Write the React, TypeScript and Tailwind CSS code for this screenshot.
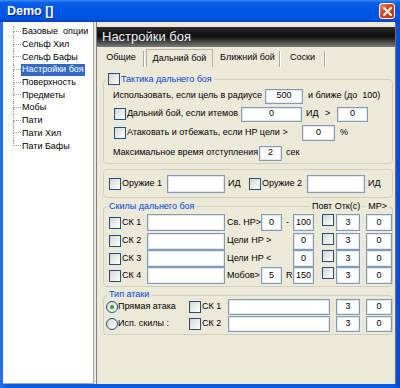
import React from 'react';

// tree on the left
const treeItems = [
  'Базовые  опции',
  'Сельф Хил',
  'Сельф Бафы',
  'Настройки боя',
  'Поверхность',
  'Предметы',
  'Мобы',
  'Пати',
  'Пати Хил',
  'Пати Бафы',
];

const Check = () => (
  <span className="inline-block w-[12px] h-[12px] shrink-0 border border-[#1C5180] bg-[linear-gradient(135deg,#D6D6CE,#FFFFFF)]" />
);

const Radio = ({ on = false }: { on?: boolean }) => (
  <span className="flex items-center justify-center w-[12px] h-[12px] shrink-0 rounded-full border border-[#1C5180] bg-[linear-gradient(135deg,#D6D6CE,#FFFFFF)]">
    {on && <span className="w-[4px] h-[4px] rounded-full bg-[#21A121]" />}
  </span>
);

const Field = ({ className, value = '' }: { className: string; value?: string }) => (
  <div
    className={`flex items-center justify-center shrink-0 bg-white border border-[#7F9DB9] shadow-[inset_0_0_0_1px_#E4E8EE] ${className}`}
  >
    {value}
  </div>
);

const TitleBar = () => (
  <div className="h-[22px] flex items-center pl-[7px] pr-[5px] bg-[linear-gradient(to_bottom,#3D8DF5_0%,#0A60E8_12%,#0056E6_50%,#0052DF_85%,#0042C4_100%)]">
    <span className="font-bold text-[12.5px] text-white [text-shadow:1px_1px_0_#0A2A8C]">Demo []</span>
    <div className="ml-auto w-[16px] h-[16px] rounded-[3px] border border-white bg-[linear-gradient(135deg,#EA8A6C,#D9461F_45%,#C2320F)] flex items-center justify-center">
      <svg width="9" height="9" viewBox="0 0 9 9">
        <path d="M1 1 L8 8 M8 1 L1 8" stroke="white" strokeWidth="2" strokeLinecap="round" />
      </svg>
    </div>
  </div>
);

const Tree = () => (
  <div className="w-[90px] bg-white border-b border-[#ACA899] pt-[3.5px] pl-[10px]">
    {treeItems.map((t, i) => (
      <div key={t} className="flex h-[12.7px]">
        <div className="w-[8px] flex flex-col">
          <div className="h-1/2 border-l border-b border-dotted border-[#A0A0A0]" />
          <div className={`h-1/2 border-dotted border-[#A0A0A0] ${i < treeItems.length - 1 ? 'border-l' : ''}`} />
        </div>
        <span
          className={`flex items-center px-[1px] whitespace-pre leading-none ${
            t === 'Настройки боя' ? 'bg-[#316AC5] text-white' : ''
          }`}
        >
          {t}
        </span>
      </div>
    ))}
  </div>
);

const Tabs = () => (
  <div className="h-[18px] mt-[2px] flex pl-[2px]">
    <div className="w-[44px] flex items-center justify-center">Общие</div>
    <div className="w-[2px] mt-[2px] border-l border-r border-l-[#ACA899] border-r-white" />
    <div className="ml-[1px] w-[67px] flex items-center justify-center border border-b-0 border-[#B5B3A8]">
      Дальний бой
    </div>
    <div className="ml-[3px] w-[63px] flex items-center justify-center">Ближний бой</div>
    <div className="w-[2px] mt-[2px] border-l border-r border-l-[#ACA899] border-r-white" />
    <div className="w-[43px] flex items-center justify-center">Соски</div>
    <div className="w-[2px] mt-[2px] border-l border-r border-l-[#ACA899] border-r-white" />
  </div>
);

const box = 'rounded-[4px] border border-[#D0D0BF] flex flex-col';
const legend = 'bg-[#ECE9D8] px-[2px] text-[#0046D5] flex items-center';

const skillRows = [
  { ck: 'СК 1', label: 'Св. HP>', a: '0', mid: '-', b: '100' },
  { ck: 'СК 2', label: 'Цели HP >', b: '0' },
  { ck: 'СК 3', label: 'Цели HP <', b: '0' },
  { ck: 'СК 4', label: 'Мобов>', a: '5', mid: 'R', b: '150' },
];
const skillHeights = ['h-[19px]', 'h-[18px]', 'h-[17px]', 'h-[17px]'];

const Settings = () => (
  <div className="flex-1 flex flex-col pt-[5px]">
    <div className="h-[20px] flex items-center pl-[5px] text-[13px] text-[#F0F0F0] bg-[linear-gradient(to_bottom,#2E2E2E,#0A0A0A_45%,#7C7C7C)]">
      Настройки боя
    </div>
    <Tabs />

    <div className="flex flex-col pl-[6px] pr-[2px]">
      {/* тактика */}
      <div className={`${box} mt-[12px] h-[85px]`}>
        <div className="-mt-[8px] h-[14px] leading-[14px] flex pl-[2px]">
          <span className={`${legend} gap-[1px]`}>
            <Check />
            Тактика дальнего боя
          </span>
        </div>
        <div className="h-[20px] flex items-center pl-[9px] whitespace-nowrap">
          <span className="w-[152px]">Использовать, если цель в радиусе</span>
          <Field className="w-[38px] h-[15px]" value="500" />
          <span className="ml-[5px] whitespace-pre">и ближе (до  100)</span>
        </div>
        <div className="h-[16px] flex items-center pl-[10px] whitespace-nowrap">
          <Check />
          <span className="ml-[1px] w-[114px]">Дальний бой, если итемов</span>
          <Field className="w-[61px] h-[15px]" value="0" />
          <span className="ml-[4px] w-[19px]">ИД</span>
          <span className="w-[12px]">&gt;</span>
          <Field className="w-[31px] h-[15px]" value="0" />
        </div>
        <div className="h-[22px] flex items-center pl-[10px] whitespace-nowrap">
          <Check />
          <span className="ml-[1px] w-[175px]">Атаковать и отбежать, если HP цели  &gt;</span>
          <Field className="w-[33px] h-[16px]" value="0" />
          <span className="ml-[5px]">%</span>
        </div>
        <div className="h-[18px] flex items-center pl-[9px] whitespace-nowrap">
          <span className="w-[146px]">Максимальное время отступления</span>
          <Field className="w-[23px] h-[15px]" value="2" />
          <span className="ml-[4px]">сек</span>
        </div>
      </div>

      {/* оружие */}
      <div className={`${box} mt-[5px] h-[29px]`}>
        <div className="h-[27px] flex items-center pl-[5px] whitespace-nowrap">
          <Check />
          <span className="ml-[1px] w-[45px]">Оружие 1</span>
          <Field className="w-[58px] h-[18px]" />
          <span className="ml-[3px] w-[21px]">ИД</span>
          <Check />
          <span className="ml-[1px] w-[45px]">Оружие 2</span>
          <Field className="w-[58px] h-[18px]" />
          <span className="ml-[3px]">ИД</span>
        </div>
      </div>

      {/* скилы */}
      <div className={`${box} mt-[8px] h-[81px]`}>
        <div className="-mt-[8px] h-[14px] leading-[14px] flex pl-[3px] pr-[3px]">
          <span className={legend}>Скилы дальнего боя</span>
          <span className="ml-auto bg-[#ECE9D8] px-[2px]">Повт Отк(с)</span>
          <span className="ml-[4px] bg-[#ECE9D8] px-[2px]">MP&gt;</span>
        </div>
        {skillRows.map((r, i) => (
          <div key={r.ck} className={`${skillHeights[i]} flex items-center pl-[5px] whitespace-nowrap`}>
            <Check />
            <span className="ml-[1px] w-[25px]">{r.ck}</span>
            <Field className="w-[78px] h-[17px]" />
            {r.a ? (
              <>
                <span className="ml-[2px] w-[34px]">{r.label}</span>
                <Field className="w-[21px] h-[17px]" value={r.a} />
                <span className={`w-[11px] ${r.mid === 'R' ? 'pl-[4px]' : 'text-center'}`}>{r.mid}</span>
              </>
            ) : (
              <span className="ml-[2px] w-[66px]">{r.label}</span>
            )}
            <Field className="w-[21px] h-[17px]" value={r.b} />
            <span className="ml-[8px]">
              <Check />
            </span>
            <Field className="ml-[2px] w-[24px] h-[17px]" value="3" />
            <Field className="ml-[6px] w-[26px] h-[17px]" value="0" />
          </div>
        ))}
      </div>

      {/* тип атаки */}
      <div className={`${box} mt-[8px] h-[40px]`}>
        <div className="-mt-[8px] h-[11px] leading-[14px] flex pl-[3px]">
          <span className={legend}>Тип атаки</span>
        </div>
        {[
          { label: 'Прямая атака', ck: 'СК 1', on: true, h: 'h-[16px]' },
          { label: 'Исп. скилы :', ck: 'СК 2', on: false, h: 'h-[17px]' },
        ].map((r) => (
          <div key={r.ck} className={`${r.h} flex items-center pl-[2px] whitespace-nowrap`}>
            <Radio on={r.on} />
            <span className="w-[71px]">{r.label}</span>
            <Check />
            <span className="ml-[1px] w-[26px]">{r.ck}</span>
            <Field className="w-[102px] h-[16px]" />
            <Field className="ml-[6px] w-[24px] h-[16px]" value="3" />
            <Field className="ml-[6px] w-[26px] h-[16px]" value="0" />
          </div>
        ))}
      </div>
    </div>
  </div>
);

export default function App() {
  return (
    <div className="w-[400px] h-[388px] flex flex-col overflow-hidden bg-[#0A5CE8] text-[9px] text-black font-['Liberation_Sans',Arial,sans-serif]">
      <TitleBar />
      <div className="flex-1 flex flex-col pl-[3px] pr-[4px] pb-[4px] bg-[linear-gradient(to_right,#2A6FF0,#0A5CE8_2%,#0A5CE8_98%,#0848D0)]">
        <div className="flex-1 flex bg-[#ECE9D8]">
          <Tree />
          <div className="w-[4px] border-l border-r border-l-[#ACA899] border-r-[#808080]" />
          <Settings />
          <div className="w-[1px] bg-[#716F64]" />
        </div>
      </div>
    </div>
  );
}
